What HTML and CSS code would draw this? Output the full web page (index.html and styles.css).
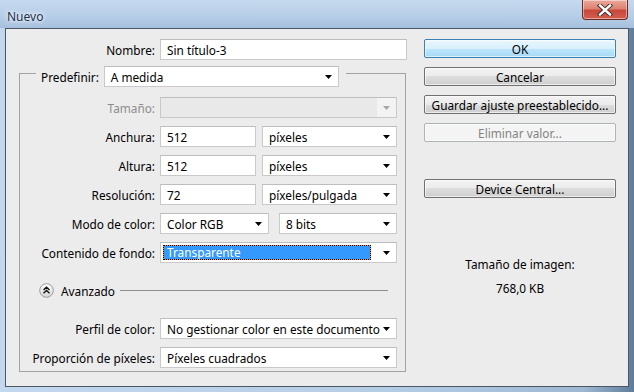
FILE: index.html
```html
<!DOCTYPE html>
<html lang="es">
<head>
    <meta charset="UTF-8">
    <title>Nuevo</title>
    <link rel="stylesheet" href="styles.css">
</head>
<body>
    <div class="window">
        <div class="titlebar">
            <span class="title">Nuevo</span>
            <div class="close">
                <svg width="16" height="12" viewBox="0 0 16 12">
                    <path d="M3 1.5L13 10.5M13 1.5L3 10.5" stroke="#3a2a2a" stroke-width="4.2" stroke-linecap="square"/>
                    <path d="M3 1.5L13 10.5M13 1.5L3 10.5" stroke="#ffffff" stroke-width="2.4" stroke-linecap="square"/>
                </svg>
            </div>
        </div>

        <div class="client">
            <div class="left">
                <div class="row name-row">
                    <span class="lbl">Nombre:</span>
                    <div class="field name">Sin título-3</div>
                </div>

                <div class="group">
                    <div class="legend">
                        <span class="legend-label">Predefinir:</span>
                        <div class="field select preset">A medida
                            <svg class="arrow" width="7" height="4"><path d="M0 0h7L3.5 4z"/></svg>
                        </div>
                    </div>

                    <div class="row first">
                        <span class="lbl disabled">Tamaño:</span>
                        <div class="field select off wide">
                            <span class="off-arrow"><svg class="arrow" width="7" height="4"><path d="M0 0h7L3.5 4z"/></svg></span>
                        </div>
                    </div>

                    <div class="row">
                        <span class="lbl">Anchura:</span>
                        <div class="field num">512</div>
                        <div class="field select unit">píxeles
                            <svg class="arrow" width="7" height="4"><path d="M0 0h7L3.5 4z"/></svg>
                        </div>
                    </div>

                    <div class="row">
                        <span class="lbl">Altura:</span>
                        <div class="field num">512</div>
                        <div class="field select unit">píxeles
                            <svg class="arrow" width="7" height="4"><path d="M0 0h7L3.5 4z"/></svg>
                        </div>
                    </div>

                    <div class="row">
                        <span class="lbl">Resolución:</span>
                        <div class="field num">72</div>
                        <div class="field select unit">píxeles/pulgada
                            <svg class="arrow" width="7" height="4"><path d="M0 0h7L3.5 4z"/></svg>
                        </div>
                    </div>

                    <div class="row">
                        <span class="lbl">Modo de color:</span>
                        <div class="field select mode">Color RGB
                            <svg class="arrow" width="7" height="4"><path d="M0 0h7L3.5 4z"/></svg>
                        </div>
                        <div class="field select bits">8 bits
                            <svg class="arrow" width="7" height="4"><path d="M0 0h7L3.5 4z"/></svg>
                        </div>
                    </div>

                    <div class="row">
                        <span class="lbl">Contenido de fondo:</span>
                        <div class="field select wide focus">
                            <span class="selected">Transparente</span>
                            <svg class="arrow" width="7" height="4"><path d="M0 0h7L3.5 4z"/></svg>
                        </div>
                    </div>

                    <div class="advanced">
                        <svg class="adv-icon" width="15" height="15" viewBox="0 0 15 15">
                            <defs>
                                <linearGradient id="g" x1="0" y1="0" x2="0" y2="1">
                                    <stop offset="0" stop-color="#ffffff"/>
                                    <stop offset="1" stop-color="#d6d6d6"/>
                                </linearGradient>
                            </defs>
                            <circle cx="7.5" cy="7.5" r="6.8" fill="url(#g)" stroke="#9a9a9a"/>
                            <path d="M4.5 7L7.5 4.2L10.5 7M4.5 10.3L7.5 7.5L10.5 10.3" fill="none" stroke="#111" stroke-width="1.4"/>
                        </svg>
                        <span>Avanzado</span>
                        <div class="adv-line"></div>
                    </div>

                    <div class="row profile">
                        <span class="lbl">Perfil de color:</span>
                        <div class="field select wide">No gestionar color en este documento
                            <svg class="arrow" width="7" height="4"><path d="M0 0h7L3.5 4z"/></svg>
                        </div>
                    </div>

                    <div class="row">
                        <span class="lbl">Proporción de píxeles:</span>
                        <div class="field select wide">Píxeles cuadrados
                            <svg class="arrow" width="7" height="4"><path d="M0 0h7L3.5 4z"/></svg>
                        </div>
                    </div>
                </div>
            </div>

            <div class="right">
                <div class="btn default">OK</div>
                <div class="btn">Cancelar</div>
                <div class="btn">Guardar ajuste preestablecido...</div>
                <div class="btn disabled-btn">Eliminar valor...</div>
                <div class="btn device">Device Central...</div>

                <div class="info">
                    <p>Tamaño de imagen:</p>
                    <p class="size">768,0 KB</p>
                </div>
            </div>
        </div>
    </div>
</body>
</html>
```

FILE: styles.css
```css
body {
    margin: 0;
    font-family: "Noto Sans", "Open Sans", sans-serif;
    font-size: 11.8px;
    color: #000;
}

/* Marco de la ventana */
.window {
    width: 634px;
    height: 392px;
    display: flex;
    flex-direction: column;
    background: linear-gradient(90deg, #c3d8ee 0%, #b6cde6 60%, #9fb8d2 92%, #5f7d9a 100%);
    overflow: hidden;
}

.titlebar {
    height: 28px;
    flex-shrink: 0;
    display: flex;
    align-items: flex-start;
    justify-content: space-between;
    background: linear-gradient(180deg, #c6d9ee 0%, #b7cee7 55%, #a6c0dd 100%);
}

.title {
    margin: 8px 0 0 7px;
    font-size: 12px;
    color: #1b2f4c;
    text-shadow: 0 0 6px #ffffff, 0 0 3px #ffffff;
}

.close {
    width: 44px;
    height: 19px;
    margin-right: 6px;
    display: flex;
    align-items: center;
    justify-content: center;
    border: 1px solid #6b2a24;
    border-top: none;
    border-radius: 0 0 4px 4px;
    background: linear-gradient(180deg, #eba89c 0%, #dd8272 45%, #c8483a 55%, #d45e4e 100%);
    box-shadow: inset 0 0 0 1px rgba(255, 255, 255, 0.45);
}

/* Zona de contenido del dialogo */
.client {
    flex: 1;
    margin: 0 5px 5px 5px;
    border: 1px solid #4b5766;
    background-color: #ececec;
    display: flex;
}

.left {
    width: 401px;
    padding-top: 10px;
}

.row {
    display: flex;
    align-items: center;
    height: 21px;
    margin-top: 8px;
}

.lbl {
    width: 135px;
    margin-right: 5px;
    text-align: right;
    white-space: nowrap;
}

.lbl.disabled {
    color: #8c8c8c;
}

.name-row {
    margin-top: 0;
}

.name-row .lbl {
    width: 149px;
}

/* Campos de texto y desplegables */
.field {
    box-sizing: border-box;
    height: 21px;
    padding: 0 6px;
    display: flex;
    align-items: center;
    background-color: #ffffff;
    border: 1px solid #c9c9c9;
    border-top-color: #bdbdbd;
    white-space: nowrap;
}

.name {
    width: 247px;
}

.select {
    justify-content: space-between;
}

.arrow {
    flex-shrink: 0;
    fill: #000;
}

.wide {
    width: 237px;
}

.num {
    width: 96px;
    margin-right: 6px;
}

.unit {
    width: 135px;
}

.mode {
    width: 109px;
    margin-right: 10px;
}

.bits {
    width: 118px;
}

.off {
    background-color: #e9e9e9;
    justify-content: flex-end;
    padding: 0;
}

.off-arrow {
    width: 19px;
    height: 19px;
    display: flex;
    align-items: center;
    justify-content: center;
    background-color: #f3f3f3;
}

.off-arrow .arrow {
    fill: #a8a8a8;
}

.focus {
    padding: 0 6px 0 2px;
}

.selected {
    flex: 1;
    margin-right: 12px;
    height: 15px;
    line-height: 15px;
    padding-left: 4px;
    background-color: #3399ff;
    color: #ffffff;
    box-shadow: inset 0 0 0 1px #f49a1b;
    outline: 1px dotted #000;
    outline-offset: -1px;
}

/* Grupo de ajustes */
.group {
    box-sizing: border-box;
    width: 387px;
    height: 299px;
    margin: 13px 0 0 13px;
    border: 1px solid #a2a2a2;
    padding-right: 8px;
}

.legend {
    display: flex;
    align-items: center;
    width: fit-content;
    margin: -8px 0 0 16px;
    padding: 0 7px 0 5px;
    background-color: #ececec;
}

.legend-label {
    margin-right: 5px;
}

.preset {
    width: 235px;
}

.row.first {
    margin-top: 10px;
}

.advanced {
    display: flex;
    align-items: center;
    height: 15px;
    margin: 20px 9px 0 19px;
}

.adv-icon {
    margin-right: 7px;
}

.adv-line {
    flex: 1;
    height: 1px;
    margin-left: 5px;
    background-color: #8e8e8e;
}

.row.profile {
    margin-top: 20px;
}

/* Columna de botones */
.right {
    width: 192px;
    margin-left: 17px;
    padding-top: 10px;
}

.btn {
    box-sizing: border-box;
    height: 19px;
    margin-bottom: 9px;
    display: flex;
    align-items: center;
    justify-content: center;
    border: 1px solid #707070;
    border-radius: 2px;
    background: linear-gradient(180deg, #f2f2f2 0%, #ebebeb 50%, #dddddd 50%, #cfcfcf 100%);
    box-shadow: inset 0 0 0 1px rgba(255, 255, 255, 0.6);
}

.btn.default {
    border-color: #3c7fb1;
    background: linear-gradient(180deg, #eaf6fd 0%, #d9f0fc 50%, #bee6fd 50%, #a7d9f5 100%);
}

.btn.disabled-btn {
    border-color: #adb2b5;
    background: #f4f4f4;
    color: #838383;
}

.btn.device {
    margin-top: 37px;
}

.info {
    margin-top: 58px;
    text-align: center;
}

.info p {
    margin: 0;
    line-height: 16px;
}

.info .size {
    margin-top: 8px;
}
```
